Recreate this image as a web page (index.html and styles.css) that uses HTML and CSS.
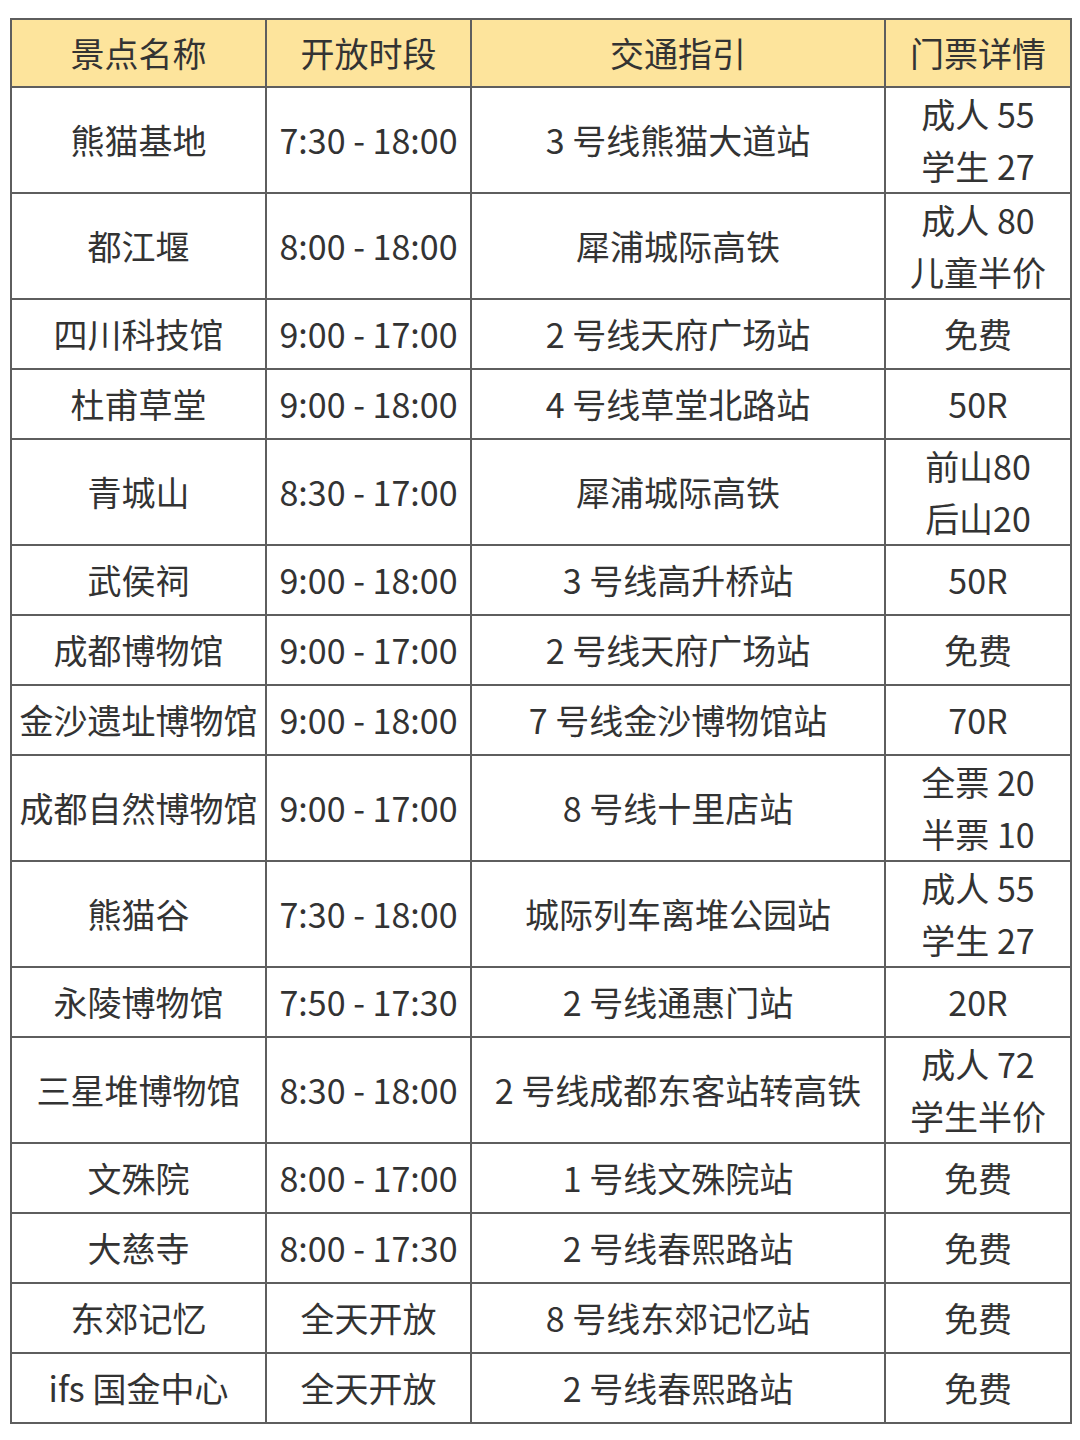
FILE: index.html
```html
<!DOCTYPE html>
<html lang="zh-CN">
<head>
<meta charset="utf-8">
<link rel="stylesheet" href="styles.css">
</head>
<body>
<table class="guide">
  <colgroup>
    <col class="c1"><col class="c2"><col class="c3"><col class="c4">
  </colgroup>
  <thead>
    <tr class="head"><th>景点名称</th><th>开放时段</th><th>交通指引</th><th>门票详情</th></tr>
  </thead>
  <tbody>
    <tr class="d"><td>熊猫基地</td><td>7:30 - 18:00</td><td>3 号线熊猫大道站</td><td>成人 55<br>学生 27</td></tr>
    <tr class="d"><td>都江堰</td><td>8:00 - 18:00</td><td>犀浦城际高铁</td><td>成人 80<br>儿童半价</td></tr>
    <tr class="s"><td>四川科技馆</td><td>9:00 - 17:00</td><td>2 号线天府广场站</td><td>免费</td></tr>
    <tr class="s"><td>杜甫草堂</td><td>9:00 - 18:00</td><td>4 号线草堂北路站</td><td>50R</td></tr>
    <tr class="d"><td>青城山</td><td>8:30 - 17:00</td><td>犀浦城际高铁</td><td>前山80<br>后山20</td></tr>
    <tr class="s"><td>武侯祠</td><td>9:00 - 18:00</td><td>3 号线高升桥站</td><td>50R</td></tr>
    <tr class="s"><td>成都博物馆</td><td>9:00 - 17:00</td><td>2 号线天府广场站</td><td>免费</td></tr>
    <tr class="s"><td>金沙遗址博物馆</td><td>9:00 - 18:00</td><td>7 号线金沙博物馆站</td><td>70R</td></tr>
    <tr class="d"><td>成都自然博物馆</td><td>9:00 - 17:00</td><td>8 号线十里店站</td><td>全票 20<br>半票 10</td></tr>
    <tr class="d"><td>熊猫谷</td><td>7:30 - 18:00</td><td>城际列车离堆公园站</td><td>成人 55<br>学生 27</td></tr>
    <tr class="s"><td>永陵博物馆</td><td>7:50 - 17:30</td><td>2 号线通惠门站</td><td>20R</td></tr>
    <tr class="d short"><td>三星堆博物馆</td><td>8:30 - 18:00</td><td>2 号线成都东客站转高铁</td><td>成人 72<br>学生半价</td></tr>
    <tr class="s"><td>文殊院</td><td>8:00 - 17:00</td><td>1 号线文殊院站</td><td>免费</td></tr>
    <tr class="s"><td>大慈寺</td><td>8:00 - 17:30</td><td>2 号线春熙路站</td><td>免费</td></tr>
    <tr class="s"><td>东郊记忆</td><td>全天开放</td><td>8 号线东郊记忆站</td><td>免费</td></tr>
    <tr class="s"><td>ifs 国金中心</td><td>全天开放</td><td>2 号线春熙路站</td><td>免费</td></tr>
  </tbody>
</table>
</body>
</html>
```

FILE: styles.css
```css
html, body {
  margin: 0;
  padding: 0;
  background: #ffffff;
}

body {
  font-family: "Noto Sans CJK SC", "Noto Sans", sans-serif;
  color: #333333;
}

.guide {
  margin: 18px 0 0 10px;
  width: 1060px;
  table-layout: fixed;
  border-collapse: separate;
  border-spacing: 0;
  border-top: 2px solid #5e5e5e;
  border-left: 2px solid #5e5e5e;
}

.c1 { width: 255px; }
.c2 { width: 205px; }
.c3 { width: 414px; }
.c4 { width: 186px; }

.guide th,
.guide td {
  box-sizing: border-box;
  padding: 0;
  border-right: 2px solid #5e5e5e;
  border-bottom: 2px solid #5e5e5e;
  text-align: center;
  vertical-align: middle;
  font-size: 34px;
  font-weight: 400;
  line-height: 52px;
  white-space: nowrap;
  overflow: hidden;
}

.head th {
  background: #fde49c;
  height: 68px;
}

.s td { height: 70px; }
.d td { height: 105px; }
.d.short td { height: 102px; }
```
